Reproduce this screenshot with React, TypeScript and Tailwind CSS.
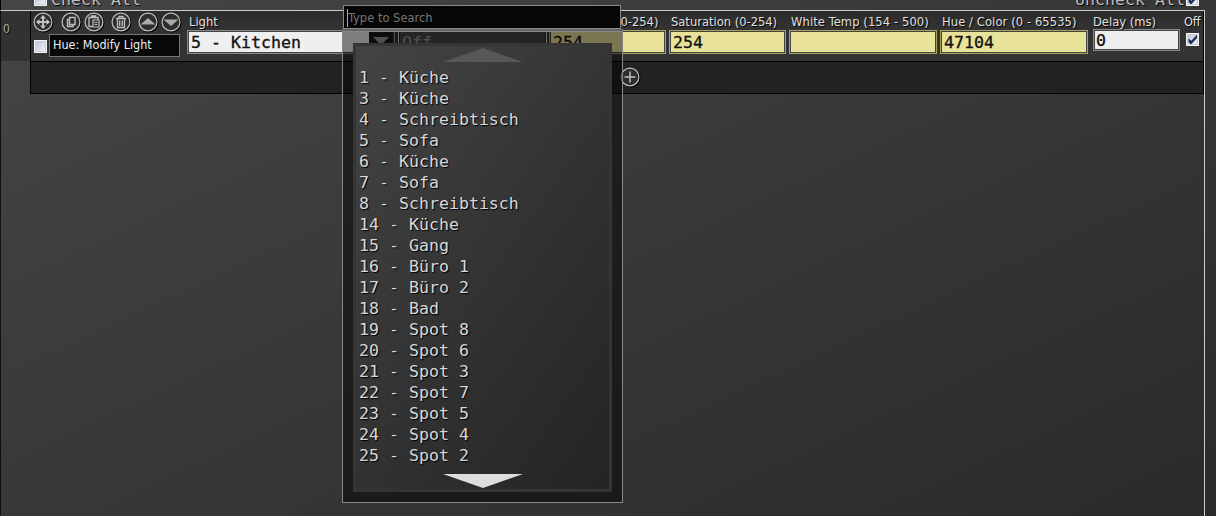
import type { ReactNode } from "react";

const items = [
  "1 - Küche", "3 - Küche", "4 - Schreibtisch", "5 - Sofa", "6 - Küche", "7 - Sofa",
  "8 - Schreibtisch", "14 - Küche", "15 - Gang", "16 - Büro 1", "17 - Büro 2", "18 - Bad",
  "19 - Spot 8", "20 - Spot 6", "21 - Spot 3", "22 - Spot 7", "23 - Spot 5", "24 - Spot 4", "25 - Spot 2",
];

const mono = "font-['DejaVu_Sans_Mono',monospace] text-[16.6px]";
const ink = "text-[#111] [-webkit-text-stroke:0.3px_#111]";
const shadow = "[text-shadow:1px_1px_1px_#000]";

function Check({ on = false }: { on?: boolean }) {
  return (
    <span className="flex size-[13px] shrink-0 items-center justify-center border border-[#f4f4f4] bg-linear-to-br from-[#b9c3d6] to-[#f4f5f8] outline-1 -outline-offset-2 outline-[#c9cdd5]">
      {on && (
        <svg width="11" height="11" viewBox="0 0 11 11">
          <path d="M1.5 4.5v3.5l2.5 2.5 6-6.5V.5L4.3 6.8z" fill="#1e2c5c" />
        </svg>
      )}
    </span>
  );
}

function Round({ children, className = "" }: { children: ReactNode; className?: string }) {
  return (
    <svg width="20" height="20" viewBox="0 0 20 20" className={`shrink-0 drop-shadow-[1px_1px_0px_#000] ${className}`} fill="none" stroke="#c0c0c0">
      <circle cx="10" cy="10" r="8.9" fill="#2d2d2d" strokeWidth="1.2" />
      {children}
    </svg>
  );
}

function Field({ label, value = "", className, spacing }: { label: string; value?: string; className: string; spacing: string }) {
  return (
    <div className={`shrink-0 pt-1 ${className}`}>
      <div className={`h-[15px] pl-0.5 text-[12.8px] leading-[13px] whitespace-nowrap text-[#e0e0e0] ${shadow} ${spacing}`}>{label}</div>
      <div className="h-6 border border-[#a9a457] bg-[#444] p-px">
        <div className={`h-full bg-[#e8e29a] pl-0.5 leading-[21px] ${ink} ${mono}`}>{value}</div>
      </div>
    </div>
  );
}

function Row() {
  return (
    <div className="flex h-[51px] border-b border-black bg-linear-to-b from-[#2b2b2b] via-[#323232] via-30% to-[#343434]">
      <div className="w-[156px] shrink-0 pl-[2px] pt-px">
        <div className="flex h-5">
          <Round>
            <path d="M10 4v12M4 10h12" strokeWidth="2" />
            <path d="M10 3l3 3.5H7zM10 17l3-3.5H7zM3 10l3.5-3v6zM17 10l-3.5-3v6z" fill="#c6c6c6" stroke="none" />
          </Round>
          <Round className="ml-2">
            <path d="M8.500 5.500h5.500v7h-5.500zM8.500 7.500H6.500v7h5.500v-2" strokeWidth="1.4" />
          </Round>
          <Round className="ml-[3px]">
            <path d="M8.500 14.500H5v-9h9v2M7.500 5.500v-1.500h4v1.500" strokeWidth="1.3" />
            <path d="M9 8h6v7H9zM10.500 10.500h3M10.500 12.500h3" strokeWidth="1.2" />
          </Round>
          <Round className="ml-[7px]">
            <path d="M5 6.500h10M8 6V4.500h4V6M6.500 7v8.500h7V7M8.700 8.500v5.500M11.300 8.500v5.500" strokeWidth="1.3" />
          </Round>
          <Round className="ml-[7px]"><path d="M2.500 12.500L10 6l7.500 6.500z" fill="#aaa" stroke="none" /></Round>
          <Round className="ml-[3px]"><path d="M2.500 7.500L10 14l7.500-6.500z" fill="#aaa" stroke="none" /></Round>
        </div>
        <div className="mt-0.5 flex pl-px">
          <div className="pt-[6px]"><Check /></div>
          <div className="ml-[2px] h-[23px] w-[131px] border border-[#777] bg-[#080808] pl-[3px] text-[12.5px] leading-[20px] whitespace-nowrap text-[#eee]">
            Hue: Modify Light
          </div>
        </div>
      </div>

      <div className="w-[208px] shrink-0 pt-1">
        <div className={`h-[15px] pl-0.5 text-[12.8px] leading-[13px] text-[#e0e0e0] ${shadow}`}>Light</div>
        <div className="flex h-6 border border-[#888] bg-[#444] p-px">
          <div className={`flex-1 bg-[#efefef] pl-0.5 leading-[21px] ${ink} ${mono}`}>5 - Kitchen</div>
          <div className="flex w-[24px] justify-center bg-[#181818] pt-[3px]">
            <svg width="16" height="12" viewBox="0 0 16 12"><path d="M0 2h16L8 10z" fill="#999" /></svg>
          </div>
        </div>
      </div>
      <div className="ml-[3px] w-[149px] shrink-0 pt-[19px]">
        <div className="h-6 border border-[#ddd] bg-[#222] p-px">
          <div className={`h-full bg-[#484848] pl-[2px] leading-[21px] text-[#999] ${mono}`}>Off</div>
        </div>
      </div>
      <Field label="Brightness (0-254)" value="254" className="ml-[2px] w-[117px]" spacing="tracking-[0px]" />
      <Field label="Saturation (0-254)" value="254" className="ml-[3px] w-[117px]" spacing="tracking-[0px]" />
      <Field label="White Temp (154 - 500)" className="ml-[3px] w-[148px]" spacing="tracking-[0.1px]" />
      <Field label="Hue / Color (0 - 65535)" value="47104" className="ml-[3px] w-[148px]" spacing="tracking-[0.1px]" />
      <div className="ml-[5px] w-[87px] shrink-0 pt-1">
        <div className={`h-[14px] text-[12.8px] leading-[13px] whitespace-nowrap text-[#e0e0e0] ${shadow}`}>Delay (ms)</div>
        <div className="h-[22px] border border-[#888] bg-[#444] p-px">
          <div className={`h-full bg-[#eee] pl-px leading-[20px] ${ink} ${mono}`}>0</div>
        </div>
      </div>
      <div className="ml-1 w-[19px] shrink-0 pt-1">
        <div className={`h-[18px] text-[12.5px] leading-[13px] text-[#e0e0e0] ${shadow}`}>Off</div>
        <div className="pl-[2px]"><Check on /></div>
      </div>
    </div>
  );
}

function Dropdown() {
  return (
    <div className="absolute left-[342px] top-[5px] w-[281px]">
      <div className="ml-px flex h-6 w-[278px] border border-[#888] bg-[#060606] pl-[3px] pt-[3px]">
        <span className="h-[18px] w-px bg-[#aaa]" />
        <span className="text-[12.8px] leading-[17px] text-[#777]">Type to Search</span>
      </div>
      <div className="h-0.5 bg-[#666]" />
      <div className="h-[472px] border border-[#888] bg-black/48 px-[10px] pt-[11px]">
        <div className="flex h-[449px] flex-col border-[3px] border-[#353535] bg-linear-[125deg] from-[#444] via-[#303030] via-60% to-[#242424] pl-[3px]">
          <svg width="80" height="14" viewBox="0 0 80 14" className="ml-[84px] mt-0.5 shrink-0"><path d="M40 0l40 14H0z" fill="#575757" /></svg>
          <div className={`mt-[5px] leading-[21px] whitespace-pre text-[#d8d8d8] ${mono} [text-shadow:1px_1px_1px_#000]`}>
            {items.map((item) => <div key={item}>{item}</div>)}
          </div>
          <svg width="80" height="14" viewBox="0 0 80 14" className="ml-[84px] mt-[8px] shrink-0"><path d="M0 0h80L40 14z" fill="#ddd" /></svg>
        </div>
      </div>
    </div>
  );
}

export default function App() {
  return (
    <div className="relative h-[516px] w-[1216px] overflow-hidden bg-linear-[155deg] from-[#454545] via-[#363636] via-55% to-[#2a2a2a] font-['DejaVu_Sans_Condensed','Noto_Sans',sans-serif]">
      <div className={`flex h-[10px] items-end justify-between border-l border-black pl-[33px] pr-[17px] text-[#bbb] ${mono}`}>
        <div className="flex items-end"><div className="mb-1"><Check /></div><span className={`ml-1 leading-5 ${shadow}`}>Check All</span></div>
        <div className="flex items-end"><span className={`mr-px leading-5 ${shadow}`}>Uncheck All</span><div className="mb-1"><Check on /></div></div>
      </div>
      <div className="h-[506px] w-[1205px] border-t border-r border-l border-t-[#ccc] border-r-[#ccc] border-l-[#111]">
        <div className="flex h-[83px]">
          <div className={`h-[50px] w-[29px] shrink-0 bg-[#323232] pl-0.5 pt-2.5 text-xs text-[#aaa] ${shadow}`}>0</div>
          <div className="min-w-0 flex-1 border-x border-b border-black bg-[#222]">
            <Row />
            <div className="flex justify-center pt-[5px] pl-[26px]">
              <Round><path d="M10 4.500v11M4.500 10h11" strokeWidth="1.5" /></Round>
            </div>
          </div>
        </div>
      </div>
      <Dropdown />
    </div>
  );
}
